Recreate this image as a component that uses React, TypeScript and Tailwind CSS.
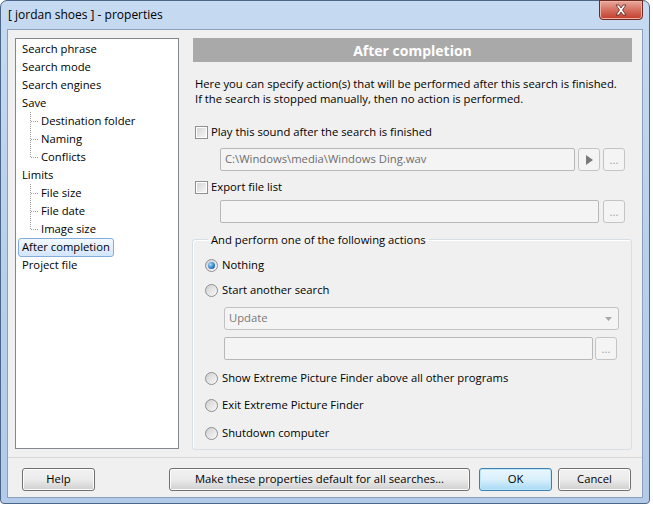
import React from 'react';

type Node = { label: string; children?: string[] };

const tree: Node[] = [
  { label: 'Search phrase' },
  { label: 'Search mode' },
  { label: 'Search engines' },
  { label: 'Save', children: ['Destination folder', 'Naming', 'Conflicts'] },
  { label: 'Limits', children: ['File size', 'File date', 'Image size'] },
  { label: 'After completion' },
  { label: 'Project file' },
];

const Connector: React.FC<{ last: boolean }> = ({ last }) => (
  <svg width="10" height="18" className="shrink-0">
    <line x1="0.5" y1="0" x2="0.5" y2={last ? 9 : 18} stroke="#a0a0a0" strokeDasharray="1 1" />
    <line x1="1" y1="9.5" x2="9" y2="9.5" stroke="#a0a0a0" strokeDasharray="1 1" />
  </svg>
);

const Checkbox: React.FC = () => (
  <span className="w-[13px] h-[13px] shrink-0 border border-[#8e8f8f] bg-white p-[1px]">
    <span className="block w-full h-full bg-gradient-to-br from-[#d6d6d6] to-[#f6f6f6]" />
  </span>
);

const Radio: React.FC<{ checked?: boolean }> = ({ checked }) => (
  <span className="w-[13px] h-[13px] shrink-0 rounded-full border border-[#8e8f8f] bg-gradient-to-br from-[#d0d0d0] to-[#fafafa] flex items-center justify-center">
    {checked && (
      <span className="w-[7px] h-[7px] rounded-full bg-[radial-gradient(circle_at_35%_35%,#a6dcfb,#2a78c4_60%,#174f93)]" />
    )}
  </span>
);

const SmallButton: React.FC<{ children: React.ReactNode }> = ({ children }) => (
  <div className="w-[22px] h-[23px] shrink-0 rounded-[3px] border border-[#c4c4c4] bg-[#f4f4f4] flex items-center justify-center text-[#a0a0a0] leading-none">
    {children}
  </div>
);

const Field: React.FC<{ value?: string; className?: string }> = ({ value, className }) => (
  <div className={`h-[23px] rounded-[2px] border border-[#b8b8b8] bg-[#f4f4f4] pl-[4px] flex items-center text-[#6d6d6d] ${className ?? ''}`}>
    {value}
  </div>
);

const Button: React.FC<{ children: React.ReactNode; className?: string; primary?: boolean }> = ({ children, className, primary }) => (
  <div
    className={`h-[23px] rounded-[3px] border flex items-center justify-center ${
      primary
        ? 'border-[#3c7fb1] bg-gradient-to-b from-[#eaf6fd] via-[#d9f0fc] to-[#a7d9f5] shadow-[inset_0_0_0_1px_#c0e6fb]'
        : 'border-[#707070] bg-gradient-to-b from-[#f2f2f2] via-[#ebebeb] to-[#cfcfcf] shadow-[inset_0_0_0_1px_#fcfcfc]'
    } ${className ?? ''}`}
  >
    {children}
  </div>
);

const App: React.FC = () => {
  return (
    <div className="w-[653px] h-[506px] bg-white font-['Segoe_UI','Open_Sans',sans-serif] text-[11.25px] text-black">
      <div className="relative w-[650px] h-[504px] rounded-t-[7px] rounded-b-[4px] border border-[#4b6687] bg-gradient-to-b from-[#c6daf1] via-[#b9d0eb] to-[#b3cbe8] flex flex-col">
        {/* Title bar */}
        <div className="h-[28px] pl-[7px] flex items-center text-[12px] leading-none">
          [ jordan shoes ] - properties
        </div>
        <div className="absolute top-[-1px] right-[6px] w-[44px] h-[20px] rounded-b-[4px] border border-[#6b2a22] bg-gradient-to-b from-[#e9a99d] via-[#d46f5f] to-[#c33a2a] flex items-center justify-center shadow-[inset_0_0_0_1px_#f0b3a6]">
          <svg width="14" height="12" viewBox="0 0 14 12">
            <path d="M2 1 L5 1 L7 4 L9 1 L12 1 L8.5 6 L12 11 L9 11 L7 8 L5 11 L2 11 L5.5 6 Z" fill="#fff" stroke="#5a2019" strokeWidth="0.8" />
          </svg>
        </div>

        {/* Client area */}
        <div className="mx-[6px] h-[469px] border border-[#8aa0bb] bg-[#f0f0f0] flex flex-col">
          <div className="flex pl-[7px] pt-[8px]">
            {/* Tree */}
            <div className="w-[164px] h-[411px] shrink-0 border border-[#828790] bg-white pt-[1px]">
              {tree.map((n) => (
                <div key={n.label}>
                  <div className="h-[18px] flex items-center pl-[6px]">
                    {n.label === 'After completion' ? (
                      <span className="-ml-[4px] h-[19px] px-[3px] flex items-center rounded-[3px] border border-[#84acdd] bg-gradient-to-b from-[#f2f8fe] to-[#d3e6fd]">
                        {n.label}
                      </span>
                    ) : (
                      n.label
                    )}
                  </div>
                  {n.children?.map((c, i) => (
                    <div key={c} className="h-[18px] flex items-center pl-[14px]">
                      <Connector last={i === n.children!.length - 1} />
                      <span className="ml-[1px]">{c}</span>
                    </div>
                  ))}
                </div>
              ))}
            </div>

            {/* Right side */}
            <div className="ml-[14px] w-[439px] flex flex-col">
              <div className="h-[24px] bg-[#a9a9a9] flex items-center justify-center text-white font-bold text-[14px]">
                After completion
              </div>
              <div className="mt-[14px] pl-[2px] leading-[15px]">
                <p>Here you can specify action(s) that will be performed after this search is finished.</p>
                <p>If the search is stopped manually, then no action is performed.</p>
              </div>

              <div className="mt-[18px] pl-[2px] h-[16px] flex items-center gap-[3px]">
                <Checkbox />
                <span>Play this sound after the search is finished</span>
              </div>
              <div className="mt-[8px] pl-[27px] flex">
                <Field value="C:\Windows\media\Windows Ding.wav" className="w-[355px]" />
                <div className="ml-[3px]">
                  <SmallButton>
                    <svg width="7" height="10" viewBox="0 0 7 10">
                      <path d="M0 0 L7 5 L0 10 Z" fill="#7a7a7a" />
                    </svg>
                  </SmallButton>
                </div>
                <div className="ml-[3px]">
                  <SmallButton>...</SmallButton>
                </div>
              </div>

              <div className="mt-[8px] pl-[2px] h-[16px] flex items-center gap-[3px]">
                <Checkbox />
                <span>Export file list</span>
              </div>
              <div className="mt-[5px] pl-[27px] flex">
                <Field className="w-[379px]" />
                <div className="ml-[4px]">
                  <SmallButton>...</SmallButton>
                </div>
              </div>

              <fieldset className="mt-[9px] -ml-[1px] w-[437px] h-[218px] rounded-[3px] border border-[#d5dfe5] shadow-[inset_1px_1px_0_#fff] px-[12px] pt-[10px]">
                <legend className="ml-[3px] px-[3px] leading-[15px]">And perform one of the following actions</legend>
                <div className="h-[16px] flex items-center gap-[4px]">
                  <Radio checked />
                  <span>Nothing</span>
                </div>
                <div className="mt-[9px] h-[16px] flex items-center gap-[4px]">
                  <Radio />
                  <span>Start another search</span>
                </div>
                <div className="mt-[9px] pl-[19px]">
                  <div className="h-[23px] w-[395px] rounded-[3px] border border-[#c2c2c2] bg-[#f4f4f4] pl-[4px] pr-[6px] flex items-center justify-between text-[#7a7a7a]">
                    <span>Update</span>
                    <svg width="7" height="4" viewBox="0 0 7 4">
                      <path d="M0 0 L7 0 L3.5 4 Z" fill="#a8a8a8" />
                    </svg>
                  </div>
                  <div className="mt-[7px] flex">
                    <Field className="w-[369px]" />
                    <div className="ml-[2px]">
                      <SmallButton>...</SmallButton>
                    </div>
                  </div>
                </div>
                <div className="mt-[10px] h-[16px] flex items-center gap-[4px]">
                  <Radio />
                  <span>Show Extreme Picture Finder above all other programs</span>
                </div>
                <div className="mt-[11px] h-[16px] flex items-center gap-[4px]">
                  <Radio />
                  <span>Exit Extreme Picture Finder</span>
                </div>
                <div className="mt-[12px] h-[16px] flex items-center gap-[4px]">
                  <Radio />
                  <span>Shutdown computer</span>
                </div>
              </fieldset>
            </div>
          </div>

          {/* Footer */}
          <div className="mt-[7px] border-t border-[#d8d8d8]" />
          <div className="mt-[10px] flex pl-[14px]">
            <Button className="w-[73px]">Help</Button>
            <Button className="ml-[74px] w-[301px]">Make these properties default for all searches...</Button>
            <Button primary className="ml-[9px] w-[73px]">OK</Button>
            <Button className="ml-[6px] w-[73px]">Cancel</Button>
          </div>
        </div>
      </div>
    </div>
  );
};

export default App;
